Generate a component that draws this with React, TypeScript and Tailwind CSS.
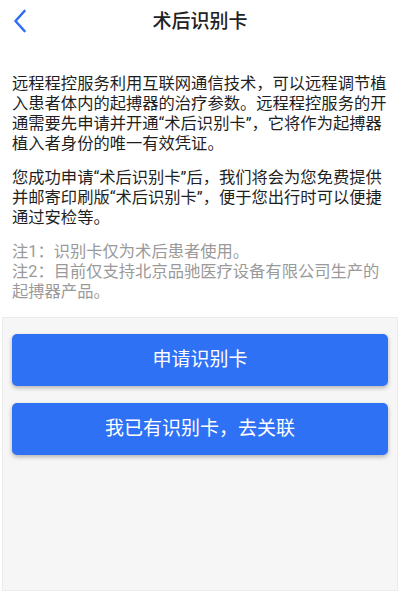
export default function App() {
  return (
    <div
      className="flex h-[593px] w-full flex-col bg-white"
      style={{ fontFamily: 'Roboto, "Noto Sans CJK SC", sans-serif' }}
    >
      {/* Header */}
      <div className="relative flex h-[44px] shrink-0 items-center justify-center">
        <button className="absolute left-[12px] top-[9px] flex h-[24px] w-[16px] items-center justify-center">
          <svg width="14" height="24" viewBox="0 0 14 24" fill="none">
            <polyline
              points="11.5,2 2.5,12 11.5,22"
              stroke="#2f6df2"
              strokeWidth="2.6"
              strokeLinecap="round"
              strokeLinejoin="round"
            />
          </svg>
        </button>
        <h1 className="text-[19px] font-medium text-[#222222]">术后识别卡</h1>
      </div>

      {/* Content */}
      <div className="shrink-0 px-[12px] pt-[30px] pb-[15px] text-[16.3px] leading-[20px]">
        <p className="text-[#1f1f1f]">
          远程程控服务利用互联网通信技术，可以远程调节植入患者体内的起搏器的治疗参数。远程程控服务的开通需要先申请并开通“术后识别卡”，它将作为起搏器植入者身份的唯一有效凭证。
        </p>
        <p className="mt-[14px] text-[#1f1f1f]">
          您成功申请“术后识别卡”后，我们将会为您免费提供并邮寄印刷版“术后识别卡”，便于您出行时可以便捷通过安检等。
        </p>
        <div className="mt-[14px] text-[#9a9a9a]">
          <p>注1：识别卡仅为术后患者使用。</p>
          <p>注2：目前仅支持北京品驰医疗设备有限公司生产的起搏器产品。</p>
        </div>
      </div>

      {/* Actions */}
      <div className="mx-[2px] mb-[2px] flex flex-1 flex-col gap-[17px] border border-[#ebebeb] bg-[#f6f6f6] px-[9px] pt-[16px]">
        <button className="h-[52px] w-full rounded-[5px] bg-[#2f71f5] text-[19px] text-white shadow-[0_2px_4px_rgba(0,0,0,0.28)]">
          申请识别卡
        </button>
        <button className="h-[52px] w-full rounded-[5px] bg-[#2f71f5] text-[19px] text-white shadow-[0_2px_4px_rgba(0,0,0,0.28)]">
          我已有识别卡，去关联
        </button>
      </div>
    </div>
  )
}
